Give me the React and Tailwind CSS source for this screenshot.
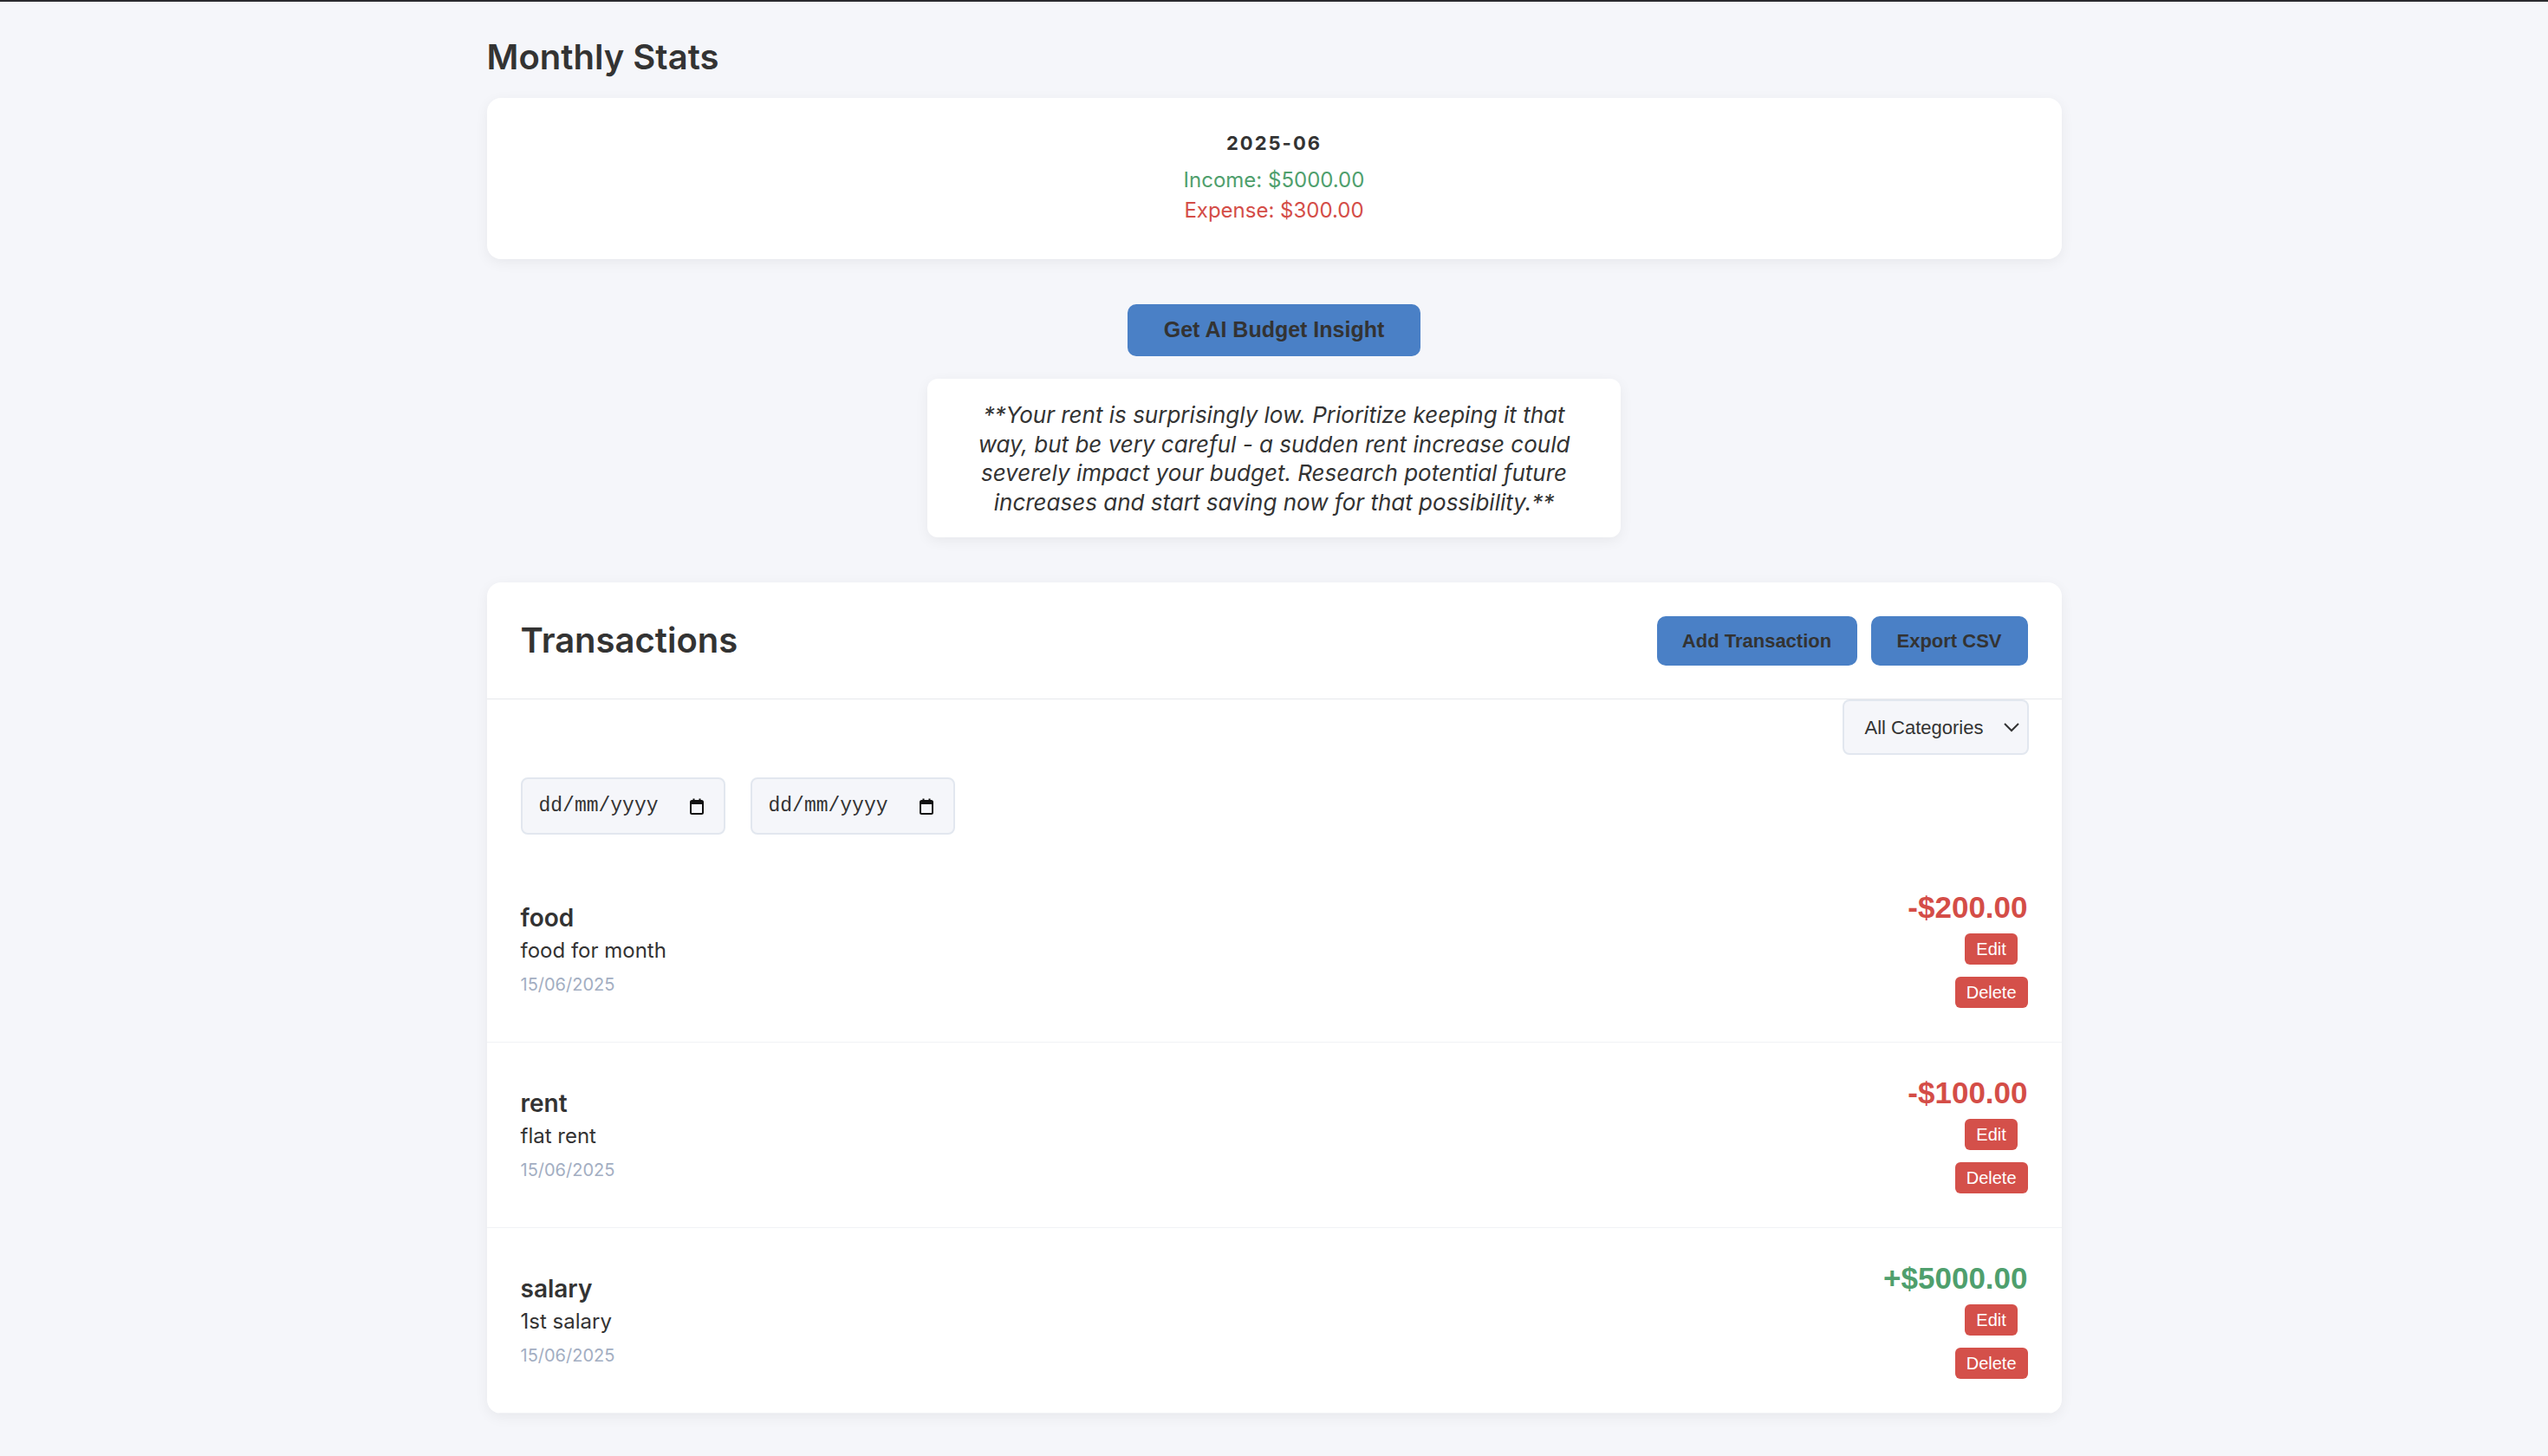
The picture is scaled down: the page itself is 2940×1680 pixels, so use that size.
import React from 'react';

const txns = [
  { id: 1, cat: 'food', desc: 'food for month', date: '15/06/2025', amount: '-$200.00', type: 'expense' },
  { id: 2, cat: 'rent', desc: 'flat rent', date: '15/06/2025', amount: '-$100.00', type: 'expense' },
  { id: 3, cat: 'salary', desc: '1st salary', date: '15/06/2025', amount: '+$5000.00', type: 'income' },
];

const sans = "font-['Inter','Noto_Sans',sans-serif]";
const arial = "font-['Liberation_Sans',Arial,sans-serif]";

function CalendarIcon() {
  return (
    <svg width="18" height="19" viewBox="0 0 18 19" className="shrink-0">
      <rect x="2" y="3" width="14" height="15" rx="1.5" fill="none" stroke="#111" strokeWidth="2" />
      <rect x="2" y="3" width="14" height="4" fill="#111" />
      <rect x="4.5" y="0.5" width="2" height="4" fill="#111" />
      <rect x="11.5" y="0.5" width="2" height="4" fill="#111" />
    </svg>
  );
}

function DateBox() {
  return (
    <div className="w-[236px] h-[66px] flex items-center justify-between pl-[19px] pr-[22px] bg-[#f5f6fa] border-2 border-[#e2e7ef] rounded-[8px]">
      <span className="font-['Liberation_Mono','DejaVu_Sans_Mono',monospace] text-[23px] text-[#333]">dd/mm/yyyy</span>
      <CalendarIcon />
    </div>
  );
}

function Row({ t }) {
  const color = t.type === 'income' ? 'text-[#4f9f6d]' : 'text-[#d44d47]';
  return (
    <div className="flex items-center justify-between px-[39px] py-[39px] border-b border-[#f1f2f5]">
      <div className={sans}>
        <div className="text-[28px] leading-[36px] font-semibold text-[#333] mb-[4px]">{t.cat}</div>
        <div className="text-[24px] leading-[32px] text-[#333] mb-[9px]">{t.desc}</div>
        <div className="text-[20px] leading-[28px] text-[#a3aec2]">{t.date}</div>
      </div>
      <div className={`flex flex-col items-end ${arial}`}>
        <div className={`text-[35px] leading-[38px] font-bold ${color}`}>{t.amount}</div>
        <div className="flex flex-col items-center mt-[11px] gap-[14px]">
          <button className="h-[36px] px-[13px] rounded-[6px] bg-[#d4504a] text-white text-[20px]">Edit</button>
          <button className="h-[36px] px-[13px] rounded-[6px] bg-[#d4504a] text-white text-[20px]">Delete</button>
        </div>
      </div>
    </div>
  );
}

export default function App() {
  return (
    <div className="min-h-screen bg-[#f5f6fa] border-t-2 border-[#2a2a2e] pb-[52px]">
      <div className="w-[1817px] mx-auto">
        <h2 className={`${sans} text-[40px] leading-[46px] font-semibold text-[#333] pt-[41px] mb-[24px]`}>Monthly Stats</h2>

        <div className={`bg-white rounded-[16px] shadow-[0_4px_16px_rgba(0,0,0,0.06)] pt-[37px] pb-[39px] text-center ${sans}`}>
          <div className="text-[22px] leading-[30px] font-bold tracking-[2px] text-[#333]">2025-06</div>
          <div className="mt-[10px] text-[24px] leading-[35px] text-[#4f9f6d]">Income: $5000.00</div>
          <div className="text-[24px] leading-[35px] text-[#d44d47]">Expense: $300.00</div>
        </div>

        <div className="flex flex-col items-center">
          <button className={`mt-[52px] w-[338px] h-[60px] rounded-[10px] bg-[#4a80c6] text-[#333] text-[25px] font-bold ${arial}`}>
            Get AI Budget Insight
          </button>
          <div className={`mt-[26px] w-[800px] bg-white rounded-[12px] shadow-[0_4px_16px_rgba(0,0,0,0.06)] pt-[25px] pb-[24px] px-[30px] text-center italic text-[26px] leading-[33.5px] text-[#333] ${sans}`}>
            **Your rent is surprisingly low. Prioritize keeping it that<br />
            way, but be very careful - a sudden rent increase could<br />
            severely impact your budget. Research potential future<br />
            increases and start saving now for that possibility.**
          </div>
        </div>

        <div className="mt-[52px] bg-white rounded-[16px] shadow-[0_4px_16px_rgba(0,0,0,0.06)] overflow-hidden">
          <div className="h-[135px] flex items-center justify-between px-[39px] border-b border-[#e6e8ec]">
            <h3 className={`${sans} text-[40px] font-semibold text-[#333]`}>Transactions</h3>
            <div className={`flex gap-[16px] ${arial}`}>
              <button className="w-[231px] h-[57px] rounded-[10px] bg-[#4a80c6] text-[#333] text-[22px] font-bold">Add Transaction</button>
              <button className="w-[181px] h-[57px] rounded-[10px] bg-[#4a80c6] text-[#333] text-[22px] font-bold">Export CSV</button>
            </div>
          </div>

          <div className="px-[38px] pb-[26px]">
            <div className="flex justify-end">
              <div className={`w-[215px] h-[64px] flex items-center justify-between pl-[24px] pr-[8px] bg-[#f5f6fa] border-2 border-[#e2e7ef] rounded-[8px] ${arial} text-[22px] text-[#333]`}>
                <span>All Categories</span>
                <svg width="20" height="12" viewBox="0 0 20 12"><path d="M2 2l8 8 8-8" fill="none" stroke="#333" strokeWidth="2" /></svg>
              </div>
            </div>
            <div className="flex gap-[29px] mt-[26px] pl-[1px]">
              <DateBox />
              <DateBox />
            </div>
          </div>

          {txns.map(t => <Row key={t.id} t={t} />)}
        </div>
      </div>
    </div>
  );
}
